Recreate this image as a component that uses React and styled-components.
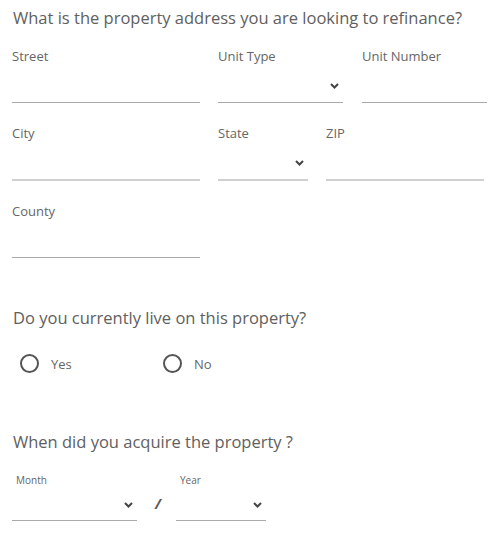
import styled, { createGlobalStyle } from "styled-components"

const GlobalStyle = createGlobalStyle`
    body {
        margin: 0;
        background: #fff;
        font-family: "Open Sans", "Liberation Sans", sans-serif;
        color: #666;
    }
`

const Page = styled.div`
    width: 500px;
    padding: 6px 0 0 12px;
    box-sizing: border-box;
`

const Heading = styled.h2`
    font-size: 16.5px;
    font-weight: 400;
    line-height: 24px;
    color: #606060;
    margin: ${p => p.$top || 0}px 0 0 1px;
`

const Row = styled.div`
    display: flex;
    gap: ${p => p.$gap || 18}px;
    margin-top: ${p => p.$top || 0}px;
`

const Field = styled.div`
    display: flex;
    flex-direction: column;
    width: ${p => p.$w}px;
    margin-left: ${p => p.$shift || 0}px;
`

const Label = styled.label`
    font-size: ${p => p.$small ? 10 : 13}px;
    line-height: ${p => p.$small ? 14 : 18}px;
    color: #666;
    padding-left: ${p => p.$small ? 4 : 0}px;
`

const Input = styled.div`
    position: relative;
    height: ${p => p.$h || 37}px;
    border-bottom: ${p => p.$light ? "2px solid #d0d0d0" : "1px solid #aaa"};
`

const Chevron = styled.svg`
    position: absolute;
    right: 4px;
    bottom: ${p => p.$bottom || 13}px;
`

const Slash = styled.div`
    width: 3px;
    align-self: flex-end;
    margin: 0 0 9px 0;
    font-size: 14px;
    font-style: italic;
    font-weight: 700;
    color: #555;
    line-height: 16px;
`

const RadioRow = styled.div`
    display: flex;
    margin: 24px 0 0 8px;
`

const Radio = styled.div`
    display: flex;
    align-items: center;
    width: 143px;
    font-size: 13px;
    color: #666;
`

const Circle = styled.span`
    width: 15px;
    height: 15px;
    border: 2px solid #555;
    border-radius: 50%;
    margin-right: 12px;
    flex-shrink: 0;
`

const Arrow = ({ bottom }) => (
  <Chevron $bottom={bottom} width="9" height="6" viewBox="0 0 9 6">
    <polyline points="1,1 4.5,4.5 8,1" fill="none" stroke="#444" strokeWidth="2" />
  </Chevron>
)

const App = () => {
  return (
    <Page>
      <GlobalStyle />
      <Heading>What is the property address you are looking to refinance?</Heading>
      <Row $top={17}>
        <Field $w={188}>
          <Label>Street</Label>
          <Input />
        </Field>
        <Field $w={125}>
          <Label>Unit Type</Label>
          <Input><Arrow /></Input>
        </Field>
        <Field $w={125} $shift={1}>
          <Label>Unit Number</Label>
          <Input />
        </Field>
      </Row>
      <Row $top={21}>
        <Field $w={188}>
          <Label>City</Label>
          <Input $light />
        </Field>
        <Field $w={90}>
          <Label>State</Label>
          <Input $light><Arrow /></Input>
        </Field>
        <Field $w={158}>
          <Label>ZIP</Label>
          <Input $light />
        </Field>
      </Row>
      <Row $top={21}>
        <Field $w={188}>
          <Label>County</Label>
          <Input />
        </Field>
      </Row>
      <Heading $top={48}>Do you currently live on this property?</Heading>
      <RadioRow>
        <Radio><Circle />Yes</Radio>
        <Radio><Circle />No</Radio>
      </RadioRow>
      <Heading $top={57}>When did you acquire the property ?</Heading>
      <Row $top={19} $gap={18}>
        <Field $w={125}>
          <Label $small>Month</Label>
          <Input $h={33}><Arrow bottom={12} /></Input>
        </Field>
        <Slash>/</Slash>
        <Field $w={90}>
          <Label $small>Year</Label>
          <Input $h={33}><Arrow bottom={12} /></Input>
        </Field>
      </Row>
    </Page>
  )
}

export default App
